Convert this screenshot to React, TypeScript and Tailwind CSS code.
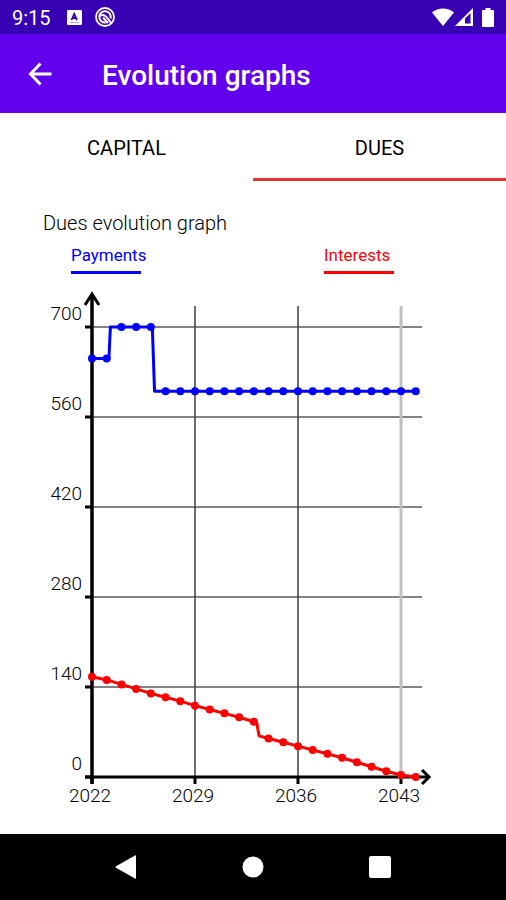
import { useState } from 'react';

type Point = { year: number; value: number; dot?: boolean };

const FIRST_YEAR = 2022;
const YEARS = [2022, 2029, 2036, 2043];
const AMOUNTS = [700, 560, 420, 280, 140, 0];

const toX = (year: number) => 92 + ((year - FIRST_YEAR) * 103) / 7;
const toY = (value: number) => 492 - (value * 450) / 700;

const payments: Point[] = [
    { year: 2022, value: 651, dot: true },
    { year: 2023, value: 651, dot: true },
    { year: 2023.15, value: 651 },
    { year: 2023.25, value: 700 },
    { year: 2024, value: 700, dot: true },
    { year: 2025, value: 700, dot: true },
    { year: 2026, value: 700, dot: true },
    { year: 2026.1, value: 700 },
    { year: 2026.25, value: 600 },
];
for (let year = 2027; year <= 2044; year++) {
    payments.push({ year, value: 600, dot: true });
}

const interestsByYear = [
    156, 151, 144, 137, 130, 124, 118, 111, 105, 99, 93, 86,
    60, 54, 48, 42, 36, 30, 23, 16, 9, 3, 0,
];
const interests: Point[] = interestsByYear.map((value, i) => ({ year: FIRST_YEAR + i, value, dot: true }));
// drop in the middle of 2033
interests.splice(12, 0, { year: 2033.2, value: 84 }, { year: 2033.35, value: 64 });

const Series = ({ points, color }: { points: Point[]; color: string }) => (
    <g fill={color}>
        <polyline
            points={points.map((p) => `${toX(p.year)},${toY(p.value)}`).join(' ')}
            fill="none"
            stroke={color}
            strokeWidth="3"
            strokeLinejoin="round"
        />
        {points.filter((p) => p.dot).map((p) => (
            <circle key={p.year} cx={toX(p.year)} cy={toY(p.value)} r="4" />
        ))}
    </g>
);

const Chart = () => (
    <svg className="block w-full" viewBox="0 0 506 549" role="img" aria-label="Dues evolution graph">
        {AMOUNTS.slice(0, 5).map((amount) => (
            <line key={amount} x1="92" x2="422" y1={toY(amount)} y2={toY(amount)} stroke="#000" strokeOpacity="0.65" strokeWidth="1.5" />
        ))}
        {YEARS.slice(1).map((year) => (
            <line
                key={year}
                x1={toX(year)}
                x2={toX(year)}
                y1="21"
                y2="492"
                stroke={year === 2043 ? '#c0c0c0' : '#3c3c3c'}
                strokeWidth={year === 2043 ? 3 : 1.5}
            />
        ))}
        <g stroke="#000" strokeWidth="3" fill="none">
            <path d="M92 9V499" strokeWidth="3.5" />
            <path d="M85 492H429" />
            <path d="M85 20L92 9L99 20" />
            <path d="M422 485L429 492L422 499" />
            {AMOUNTS.map((amount) => (
                <path key={amount} d={`M85 ${toY(amount)}H92`} />
            ))}
            {YEARS.map((year) => (
                <path key={year} d={`M${toX(year)} 492V499`} />
            ))}
        </g>
        <g className="text-[19px] font-light" fill="#000">
            {AMOUNTS.map((amount) => (
                <text key={amount} x="82" y={toY(amount) - 7} textAnchor="end">{amount}</text>
            ))}
            {YEARS.map((year) => (
                <text key={year} x={toX(year) - 2} y="517" textAnchor="middle">{year}</text>
            ))}
        </g>
        <Series points={payments} color="#0000ff" />
        <Series points={interests} color="#ff0000" />
    </svg>
);

const StatusBar = () => (
    <div className="flex h-[34px] items-center bg-[#3700b3] px-3 text-white">
        <span className="pt-0.5 text-[20px] leading-6">9:15</span>
        <svg className="ml-4 size-[15px]" viewBox="0 0 15 15" aria-hidden="true">
            <rect width="15" height="15" rx="1" fill="#fff" />
            <path d="M4.500 10L7.200 4L10 10M5.500 8H9" fill="none" stroke="#3700b3" strokeWidth="1.800" />
            <path d="M3 12.500H12" stroke="#b9a5e4" strokeWidth="1" />
        </svg>
        <svg className="ml-[13px] size-5" viewBox="0 0 20 20" fill="none" stroke="#fff" aria-hidden="true">
            <circle cx="10" cy="10" r="9" strokeWidth="1.800" />
            <path d="M11 15.500A5.700 5.700 0 1 1 15.500 11.500" strokeWidth="2" />
            <path d="M5 9C8 7 10 8 11.500 10L16.500 16.500M8 10.500L13 16" strokeWidth="2" />
        </svg>
        <div className="ml-auto flex items-center">
            <svg className="h-[18px] w-[22px]" viewBox="0 0 22 18" fill="#fff" aria-hidden="true">
                <path d="M0 4.500C6 -1 16 -1 22 4.500L11 18Z" />
            </svg>
            <svg className="ml-px size-[18px]" viewBox="0 0 18 18" aria-hidden="true">
                <path d="M0 18L18 0V18Z" fill="#fff" />
                <path d="M10 15.500V10.500L15.500 5V15.500Z" fill="#3700b3" />
            </svg>
            <svg className="ml-[9px] h-[19px] w-3" viewBox="0 0 12 19" fill="#fff" aria-hidden="true">
                <path d="M3.500 0H8.500V2H11Q12 2 12 3V18Q12 19 11 19H1Q0 19 0 18V3Q0 2 1 2H3.500Z" />
            </svg>
        </div>
    </div>
);

const NavBar = () => (
    <nav className="flex h-[66px] items-center justify-center gap-[103px] bg-black">
        <button type="button" aria-label="Back">
            <svg className="size-6" viewBox="0 0 24 24" fill="#fff">
                <path d="M2 11.200L21 .5Q22 0 22 1V23Q22 24 21 23.500L2 12.800Q1 12 2 11.200Z" />
            </svg>
        </button>
        <button type="button" aria-label="Home">
            <svg className="size-6" viewBox="0 0 24 24" fill="#fff">
                <circle cx="12" cy="12" r="10.500" />
            </svg>
        </button>
        <button type="button" aria-label="Recent apps">
            <svg className="size-6" viewBox="0 0 24 24" fill="#fff">
                <rect x="1" y="1" width="22" height="22" rx="2" />
            </svg>
        </button>
    </nav>
);

const tabs = ['CAPITAL', 'DUES'];

export default function App() {
    const [activeTab, setActiveTab] = useState('DUES');

    return (
        <div className="flex min-h-screen flex-col bg-white font-['Roboto',sans-serif] text-black">
            <StatusBar />
            <header className="flex h-[79px] items-center bg-[#6200ee] pl-7 text-white">
                <button type="button" aria-label="Navigate up">
                    <svg className="size-6" viewBox="0 0 24 24" fill="none" stroke="#fff" strokeWidth="3">
                        <path d="M23.500 12H2.500M12.500 1.500L2.500 12L12.500 22.500" />
                    </svg>
                </button>
                <h1 className="ml-[50px] pt-1 text-[28px] leading-8 font-medium">Evolution graphs</h1>
            </header>
            <div role="tablist" className="grid h-[68px] grid-cols-2">
                {tabs.map((tab) => (
                    <button
                        key={tab}
                        type="button"
                        role="tab"
                        aria-selected={tab === activeTab}
                        onClick={() => setActiveTab(tab)}
                        className={`border-b-3 pt-1 text-[20px] ${tab === activeTab ? 'border-[#e53030]' : 'border-transparent'}`}
                    >
                        {tab}
                    </button>
                ))}
            </div>
            <main className="flex-1 pt-[30px]">
                <h2 className="pl-[43px] text-[20px] leading-6 font-light">Dues evolution graph</h2>
                <div className="grid grid-cols-2 pt-2 text-[17px] leading-6">
                    <div className="pl-[71px] text-[#0000ff]">
                        Payments
                        <div className="mt-1 h-[3px] w-[70px] bg-[#0000ff]" />
                    </div>
                    <div className="pl-[71px] text-[#ff0000]">
                        Interests
                        <div className="mt-1 h-[3px] w-[70px] bg-[#ff0000]" />
                    </div>
                </div>
                <div className="pt-[11px]">
                    <Chart />
                </div>
            </main>
            <NavBar />
        </div>
    );
}
